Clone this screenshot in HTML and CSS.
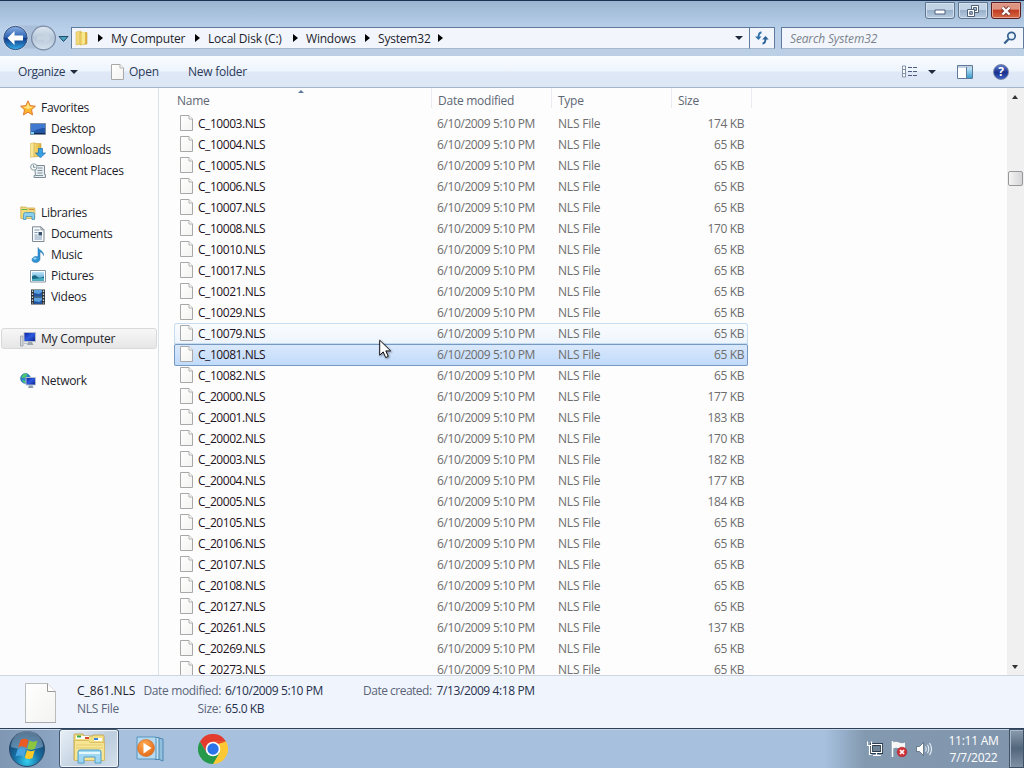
FILE: index.html
```html
<!DOCTYPE html>
<html lang="en">
<head>
    <meta charset="UTF-8">
    <title>System32</title>
    <link rel="stylesheet" href="styles.css">
</head>
<body>
    <svg class="sprite" width="0" height="0">
        <defs>
            <linearGradient id="g-paper" x1="0" y1="0" x2="1" y2="1"><stop offset="0" stop-color="#fff"/><stop offset="1" stop-color="#f3f3f1"/></linearGradient>
            <linearGradient id="g-folder" x1="0" y1="0" x2="1" y2="0"><stop offset="0" stop-color="#f6dc74"/><stop offset="1" stop-color="#d9ae3c"/></linearGradient>
            <linearGradient id="g-sky" x1="0" y1="0" x2="0" y2="1"><stop offset="0" stop-color="#bfe4f8"/><stop offset="1" stop-color="#3b9ccb"/></linearGradient>
            <linearGradient id="g-back" x1="0" y1="0" x2="0" y2="1"><stop offset="0" stop-color="#8fb4e4"/><stop offset=".48" stop-color="#2b62b4"/><stop offset=".5" stop-color="#0e3585"/><stop offset="1" stop-color="#35b4ee"/></linearGradient>
            <linearGradient id="g-forward" x1="0" y1="0" x2="0" y2="1"><stop offset="0" stop-color="#dfe8f2"/><stop offset=".5" stop-color="#b7c7d9"/><stop offset="1" stop-color="#d5e2ef"/></linearGradient>
            <linearGradient id="g-screen" x1="0" y1="0" x2="1" y2="1"><stop offset="0" stop-color="#0a1fa0"/><stop offset=".5" stop-color="#2d59de"/><stop offset="1" stop-color="#0a1c8c"/></linearGradient>
            <radialGradient id="g-orb" cx=".5" cy=".85" r=".8"><stop offset="0" stop-color="#35d0f0"/><stop offset=".45" stop-color="#176fa4"/><stop offset="1" stop-color="#17395f"/></radialGradient>
            <radialGradient id="g-play" cx=".4" cy=".3" r=".8"><stop offset="0" stop-color="#ffac54"/><stop offset="1" stop-color="#e0620f"/></radialGradient>
        </defs>
        <symbol id="i-file" viewBox="0 0 13 16">
            <path d="M.5.5h8.500l3.500 3.500v11.500h-12z" fill="url(#g-paper)" stroke="#a8a8a8"/>
            <path d="M9 .5v3.500h3.500" fill="#fff" stroke="#b0b0b0"/>
        </symbol>
        <symbol id="i-folder" viewBox="0 0 16 16">
            <path d="M2 2l5-1v13l-5 1z" fill="#f3d979" stroke="#d8bb55" stroke-width=".6"/>
            <path d="M6 2.500h7v11.500l-7 1z" fill="url(#g-folder)" stroke="#c9a640" stroke-width=".6"/>
            <path d="M8 1.500l3 .7v11l-3 2z" fill="#f7e88e"/>
        </symbol>
        <symbol id="i-star" viewBox="0 0 16 16">
            <path d="M8 .8l2.200 4.800 5.200.6-3.900 3.500 1.100 5.200L8 12.300l-4.600 2.600 1.100-5.200L.6 6.200l5.200-.6z" fill="#fdb52d" stroke="#d8702c" stroke-width=".9"/>
            <path d="M8 2.500l1.500 4 4 .4-5.500 2.100-5-2.100 3.600-.4z" fill="#ffe685"/>
        </symbol>
        <symbol id="i-desktop" viewBox="0 0 16 16">
            <path d="M.5 2.500h15v11h-15z" fill="#2456a8" stroke="#7c8fa5"/>
            <path d="M1 3h14v4c-5 0-8 2-14 4z" fill="#4178d0"/>
            <path d="M1 12.500h14" stroke="#14284a"/><path d="M1 11h3v2h-3z" fill="#7bd0f1"/>
        </symbol>
        <symbol id="i-downloads" viewBox="0 0 16 16">
            <path d="M.5 1.500l4-1v14l-4 1z" fill="#f8e796" stroke="#d8bb55" stroke-width=".6"/>
            <path d="M4 1.500h7v12.500l-7 1z" fill="url(#g-folder)" stroke="#c9a640" stroke-width=".6"/>
            <path d="M8.500 6.500h4v4.500h3l-5 4.800-5-4.800h3z" fill="#37a1e4" stroke="#1b6cae" stroke-width=".7"/>
        </symbol>
        <symbol id="i-recent" viewBox="0 0 16 16">
            <path d="M4.500 2.500h10v9h1v3h-11.500v-2h1.500z" fill="#e7edf0" stroke="#7c8d96"/>
            <path d="M7.500 5h5M7.500 7.500h5M7.500 10h5M6 12.500h7" stroke="#7e949d"/>
            <circle cx="3.800" cy="4" r="3.200" fill="#f5f9fa" stroke="#8b9da5"/><path d="M3.500 2v2.300h2" fill="none" stroke="#60737c" stroke-width=".8"/>
        </symbol>
        <symbol id="i-libraries" viewBox="0 0 16 16">
            <path d="M.8 3.200V2h5l1 1h8v10.500H.8z" fill="#f4dc7c" stroke="#c8a94a" stroke-width=".8"/>
            <path d="M1.500 4.500h6" stroke="#61b35a"/><path d="M9 4.500h5" stroke="#d68b4a"/>
            <path d="M3.500 14.500v-5q0-2 2-2h7q2 0 2 2v5h-2.500v-3h-6v3z" fill="#8dd0ee" stroke="#4595bd" stroke-width=".8"/>
        </symbol>
        <symbol id="i-documents" viewBox="0 0 16 16">
            <path d="M2.500.8h8.500l3 3v11.700h-11.500z" fill="#f8fafb" stroke="#7f8a92"/>
            <path d="M11 .8v3h3" fill="none" stroke="#7f8a92"/>
            <path d="M4.500 4h5M4.500 6.500h3M4.500 9h3M4.500 11h7.500M4.500 13h7.500" stroke="#6e8fae" stroke-width=".9"/>
            <path d="M8.500 6h3.500v3.500h-3.500z" fill="#3c536e"/>
        </symbol>
        <symbol id="i-music" viewBox="0 0 16 16">
            <path d="M8 .5c.5 2.500 6 3 5.500 8-.5-2.300-2-3.200-3.500-3.500v7c0 2-2 3.500-4.200 3.500s-3.800-1-3.800-2.800 2-3.300 4.200-3.300c.8 0 1.400.1 1.800.4z" fill="#2f93d4" stroke="#1f6fac" stroke-width=".5"/>
            <ellipse cx="5" cy="11.600" rx="1.700" ry="1" fill="#9dd8f7"/>
        </symbol>
        <symbol id="i-pictures" viewBox="0 0 16 16">
            <path d="M.5 2.500h15v11.500h-15z" fill="#fff" stroke="#8897a5"/>
            <path d="M2 4h12v8.500h-12z" fill="url(#g-sky)"/>
            <path d="M2 8.500q3-2.500 5 0t7 0v4h-12z" fill="#1a6680"/><path d="M2 11l12-1v2.500h-12z" fill="#49b1c5"/>
        </symbol>
        <symbol id="i-videos" viewBox="0 0 16 16">
            <path d="M1 .5h14v15h-14z" fill="#2d3238"/>
            <path d="M4 1h8v6.500h-8zM4 8.500h8v6.500h-8z" fill="#5ba0de"/>
            <path d="M4 4l5 1 3-2v4.500h-8zM4 12l5 1 3-2v4h-8z" fill="#23569e"/>
            <path d="M2.500 1.500v13M13.500 1.500v13" stroke="#d4dade" stroke-width="1.300" stroke-dasharray="1.500 1.500"/>
        </symbol>
        <symbol id="i-computer" viewBox="0 0 16 16">
            <path d="M.5 5h2.500v10h-2.500z" fill="#d6dadd" stroke="#8c949b" stroke-width=".7"/>
            <path d="M4 1.500h11.500v9h-11.500z" fill="url(#g-screen)" stroke="#b2bcc9"/>
            <path d="M8 11h4l1.500 3h-6.500z" fill="#9ba6b1"/><path d="M4 12.500h4" stroke="#b8c0c8"/>
        </symbol>
        <symbol id="i-network" viewBox="0 0 16 16">
            <circle cx="5.500" cy="5.500" r="5" fill="#2c83c7" stroke="#1a66a2" stroke-width=".5"/>
            <path d="M1.500 3.500q3-4 6-2.500l-2 3.500-3 .5zM2 7l4 1-1 2q-2-.5-3-3z" fill="#4fc86c"/>
            <path d="M6 4.500h9.500v7.500h-9.500z" fill="url(#g-screen)" stroke="#b5bfca"/>
            <path d="M9 12.500h3.500l1 2.500h-5.500z" fill="#8e9cab"/>
        </symbol>
    </svg>

    <div class="window">
        <header class="titlebar">
            <div class="caption-buttons">
                <span class="caption"><svg width="12" height="8"><path d="M1 3h10v4H1z" fill="#fff" stroke="#50617a"/></svg></span>
                <span class="caption"><svg width="12" height="12"><path d="M4.500.5h7v7h-7z" fill="#fff" stroke="#50617a"/><path d="M6.500 2.500h3v3h-3z" fill="#a6bcd5" stroke="#50617a"/><path d="M.5 4.500h7v7h-7z" fill="#fff" stroke="#50617a"/><path d="M2.700 6.700h2.600v2.600H2.700z" fill="#a6bcd5" stroke="#50617a"/></svg></span>
                <span class="caption close"><svg width="12" height="10"><path d="M2.500 1.500l7 7M9.500 1.500l-7 7" stroke="#7a3b3b" stroke-width="4.200"/><path d="M2.500 1.500l7 7M9.500 1.500l-7 7" stroke="#fff" stroke-width="2.400"/></svg></span>
            </div>
        </header>

        <div class="navbar">
            <svg class="nav-buttons" width="71" height="28" viewBox="0 0 71 28">
                <path d="M16 1.500h26q8 0 12 8l-4 15H14z" fill="#9fb2cc" opacity=".55"/>
                <circle cx="15.500" cy="14" r="12.300" fill="url(#g-back)" stroke="#e2ecf7"/>
                <circle cx="15.500" cy="14" r="11.700" fill="none" stroke="#39527f"/>
                <path d="M7.500 14l7-7v4.500h8.500v5h-8.500V21z" fill="#fff"/>
                <circle cx="43.500" cy="14" r="11.900" fill="url(#g-forward)" stroke="#7a8ca5" stroke-width="1.300"/>
                <path d="M51 14l-7-6.500v4.500h-7v4h7v4.500z" fill="#c6d3e0"/>
                <path d="M59 12.500h9l-4.500 5z" fill="#47a6bd" stroke="#23486e"/>
            </svg>
            <div class="address">
                <svg class="icon" width="16" height="16"><use href="#i-folder"/></svg>
                <i class="arrow"></i><span class="crumb crumb-computer">My Computer</span>
                <i class="arrow"></i><span class="crumb crumb-disk">Local Disk (C:)</span>
                <i class="arrow"></i><span class="crumb crumb-windows">Windows</span>
                <i class="arrow"></i><span class="crumb crumb-system">System32</span>
                <i class="arrow"></i>
                <i class="arrow-down"></i>
            </div>
            <div class="refresh">
                <svg width="14" height="14" viewBox="0 0 14 14"><path d="M6.500 1.500q-3 0-3 5" fill="none" stroke="#2c70a8" stroke-width="1.800"/><path d="M0 5.500h6.500L3.500 9z" fill="#2c70a8"/><path d="M7.500 12.500q3 0 3-5" fill="none" stroke="#285f96" stroke-width="1.800"/><path d="M7.200 8.500h6.500l-3.200-3.500z" fill="#285f96"/></svg>
            </div>
            <div class="search">
                <span>Search System32</span>
                <svg width="14" height="14" viewBox="0 0 14 14"><circle cx="8.500" cy="5" r="3.700" fill="#eaf4fc" stroke="#36608f" stroke-width="1.700"/><path d="M5.700 8l-4.400 4.500" stroke="#36608f" stroke-width="2.200"/></svg>
            </div>
        </div>

        <div class="toolbar">
            <span class="tool organize">Organize<i class="arrow-down"></i></span>
            <span class="tool open"><svg width="13" height="16"><use href="#i-file"/></svg>Open</span>
            <span class="tool new-folder">New folder</span>
            <div class="tool-icons">
                <svg width="16" height="14"><path d="M.5 1h3v11h-3z" fill="#fff" stroke="#8291aa"/><path d="M0 4.500h4M0 8.500h4" stroke="#8291aa"/><path d="M6 2.500h10M6 6.500h10M6 10.500h10" stroke="#4c5d7d" stroke-dasharray="4 1"/></svg>
                <i class="arrow-down"></i>
                <svg class="pane" width="16" height="14"><path d="M.5.500h15v13H.5z" fill="#fff" stroke="#5c7a9c"/><path d="M1 2h14" stroke="#84a3c4"/><path d="M10 3h5v10h-5z" fill="url(#g-sky)"/><path d="M9.500 2v11" stroke="#5c7a9c"/></svg>
                <span class="help">?</span>
            </div>
        </div>

        <div class="content">
            <nav class="sidebar">
                <div class="group">
                    <div class="item"><svg class="icon"><use href="#i-star"/></svg>Favorites</div>
                    <div class="item sub"><svg class="icon"><use href="#i-desktop"/></svg>Desktop</div>
                    <div class="item sub"><svg class="icon"><use href="#i-downloads"/></svg>Downloads</div>
                    <div class="item sub"><svg class="icon"><use href="#i-recent"/></svg>Recent Places</div>
                </div>
                <div class="group">
                    <div class="item"><svg class="icon"><use href="#i-libraries"/></svg>Libraries</div>
                    <div class="item sub"><svg class="icon"><use href="#i-documents"/></svg>Documents</div>
                    <div class="item sub"><svg class="icon"><use href="#i-music"/></svg>Music</div>
                    <div class="item sub"><svg class="icon"><use href="#i-pictures"/></svg>Pictures</div>
                    <div class="item sub"><svg class="icon"><use href="#i-videos"/></svg>Videos</div>
                </div>
                <div class="group">
                    <div class="item current"><svg class="icon"><use href="#i-computer"/></svg>My Computer</div>
                </div>
                <div class="group">
                    <div class="item"><svg class="icon"><use href="#i-network"/></svg>Network</div>
                </div>
            </nav>

            <main class="files">
                <div class="columns">
                    <span class="col-name">Name<i class="sort"></i></span>
                    <span>Date modified</span>
                    <span>Type</span>
                    <span class="col-size">Size</span>
                </div>
                <div class="rows" id="rows"></div>
            </main>

            <div class="scrollbar">
                <i class="scroll-up"></i>
                <div class="thumb"></div>
                <i class="scroll-down"></i>
            </div>
        </div>

        <footer class="details">
            <svg class="big-file" width="31" height="40" viewBox="0 0 31 40"><path d="M.5.500h22l8 8v31H.5z" fill="url(#g-paper)" stroke="#bbb"/><path d="M22.500.500v8h8" fill="#fff" stroke="#999"/><path d="M0 39.500h31" stroke="#aaa"/></svg>
            <div class="props first">
                <div class="detail-name">C_861.NLS</div>
                <div class="label">NLS File</div>
            </div>
            <div class="props second">
                <div><span class="label">Date modified:</span><span class="value">6/10/2009 5:10 PM</span></div>
                <div><span class="label">Size:</span><span class="value">65.0 KB</span></div>
            </div>
            <div class="props third">
                <div><span class="label">Date created:</span><span class="value">7/13/2009 4:18 PM</span></div>
            </div>
        </footer>
    </div>

    <div class="taskbar">
        <div class="start">
            <svg width="38" height="38" viewBox="0 0 38 38">
                <circle cx="19" cy="19" r="17.500" fill="url(#g-orb)" stroke="#2b4869"/>
                <path d="M3 17a16 16 0 0 1 32 0q-16 5-32 0z" fill="#bfd6e8" opacity=".4"/>
                <path d="M12.500 10q4-2.500 8 0l-2 8q-4-3-8.500-.5z" fill="#ea5b24"/>
                <path d="M21.500 10.500q4 2.500 8 0l-2.500 8q-4 2.500-7.500 0z" fill="#8cc63e"/>
                <path d="M9.500 19.500q4-3 8.500 0l-2.200 7.500q-4-2.500-8.300-.5z" fill="#48a5e2"/>
                <path d="M19 20q4 2.500 7.800 0l-2.300 8q-4 2.300-7.700-.2z" fill="#fdc928"/>
            </svg>
        </div>
        <div class="task active">
            <svg width="33" height="31" viewBox="0 0 33 31">
                <path d="M1 27V2q0-1 1-1h8l1 2h9V2h10q1 0 1 1v24z" fill="#f2df86" stroke="#b99d47" stroke-width=".8"/>
                <path d="M3 3h13v3H3z" fill="#fff"/><path d="M4 3.500h4" stroke="#39a84b" stroke-width="2"/><path d="M12 5h4" stroke="#d84934" stroke-width="2"/><path d="M21 6.500h8" stroke="#fff" stroke-width="3"/><path d="M21 6h4" stroke="#3b87d1" stroke-width="2"/>
                <path d="M1.500 7.500h14l2 2h14v18h-30z" fill="#f7e594" stroke="#cfb050" stroke-width=".7"/>
                <path d="M3 12h27M3 15h27" stroke="#e3cd73"/>
                <path d="M5 30V19q0-2 2-2h19q2 0 2 2v11h-6v-6H11v6z" fill="#a0d8f3" stroke="#4c9fc9"/>
                <path d="M6 20h21" stroke="#e4f7ff" stroke-width="2"/>
            </svg>
        </div>
        <div class="task media">
            <svg width="29" height="26" viewBox="0 0 29 26">
                <path d="M22 2l5 1v22l-5-2z" fill="#91bfdd" stroke="#4c87b3"/>
                <path d="M19 1.500h4v22h-4z" fill="#c2e3f2" stroke="#4c87b3"/>
                <path d="M1 1h19v22H1z" fill="#b5daf0" stroke="#5794bf"/>
                <circle cx="10" cy="12" r="8.500" fill="url(#g-play)" stroke="#ce6a28" stroke-width=".6"/>
                <path d="M7.500 7l8 5-8 5.500z" fill="#fff"/>
            </svg>
        </div>
        <div class="task chrome">
            <svg width="30" height="30" viewBox="0 0 30 30">
                <path d="M2 7.500A15 15 0 0 1 28 7.500L15 15z" fill="#e33b2e"/>
                <path d="M28 7.500A15 15 0 0 1 15 30l-3-5 3-17.500z" fill="#fcc934"/>
                <path d="M2 7.500A15 15 0 0 0 15 30l6.500-11.300L9 19z" fill="#269a4a"/>
                <path d="M2 7.500h26l-10 3-9 8.500z" fill="#e33b2e"/>
                <circle cx="15" cy="15" r="7.300" fill="#fff"/><circle cx="15" cy="15" r="5.700" fill="#2a73e8"/>
            </svg>
        </div>
        <div class="tray">
            <svg width="16" height="16"><path d="M4.500 3.500h10v8h-10z" fill="#6f8497" stroke="#2b3b4b" stroke-width="3"/><path d="M4.500 3.500h10v8h-10zM9.500 11.500v3M6 14.500h8" fill="none" stroke="#fff" stroke-width="1.200"/><path d="M.5.500v4h4v-4M2.500 4.500v9h2" fill="none" stroke="#fff" stroke-width="1.200"/></svg>
            <svg width="17" height="16"><path d="M1.500 0v16" stroke="#fff" stroke-width="1.500"/><path d="M2 1.500q3-1.500 6 0t6 0v6q-3 1.500-6 0t-6 0z" fill="#f7f7f7"/><circle cx="11" cy="11" r="4.800" fill="#d23338" stroke="#a31d25" stroke-width=".6"/><path d="M9 9l4 4M13 9l-4 4" stroke="#fff" stroke-width="1.700"/></svg>
            <svg width="16" height="16"><path d="M.5 5.500h3l4-4v13l-4-4h-3z" fill="#fff" stroke="#485a6b" stroke-width=".7"/><path d="M9.500 5.500q1.500 2.500 0 5M11.500 3.800q2.600 4.200 0 8.400M13.500 2q4 6 0 12" fill="none" stroke="#e8eff5" stroke-width="1.100"/></svg>
        </div>
        <div class="clock">
            <div>11:11 AM</div>
            <div>7/7/2022</div>
        </div>
        <div class="show-desktop"></div>
    </div>

    <svg class="cursor" width="14" height="20" viewBox="0 0 14 20"><path d="M.7 1.200v15l3.500-3.300 2.500 5.700 2.600-1.200-2.500-5.500h4.900z" fill="#fff" stroke="#111"/></svg>

    <script>
        const files = [
            ['10003', 174], ['10004', 65], ['10005', 65], ['10006', 65], ['10007', 65],
            ['10008', 170], ['10010', 65], ['10017', 65], ['10021', 65], ['10029', 65],
            ['10079', 65, 'hover'], ['10081', 65, 'selected'], ['10082', 65],
            ['20000', 177], ['20001', 183], ['20002', 170], ['20003', 182], ['20004', 177],
            ['20005', 184], ['20105', 65], ['20106', 65], ['20107', 65], ['20108', 65],
            ['20127', 65], ['20261', 137], ['20269', 65], ['20273', 65]
        ];
        document.getElementById('rows').innerHTML = files.map(([code, size, state]) => `
            <div class="row ${state || ''}">
                <svg width="13" height="16"><use href="#i-file"/></svg>
                <span class="name">C_${code}.NLS</span>
                <span class="date">6/10/2009 5:10 PM</span>
                <span class="type">NLS File</span>
                <span class="size">${size} KB</span>
            </div>`).join('');
    </script>
</body>
</html>
```
FILE: styles.css
```css
* {
    box-sizing: border-box;
}
body {
    margin: 0;
    width: 1024px;
    height: 768px;
    overflow: hidden;
    display: flex;
    flex-direction: column;
    font-family: "Open Sans", "Noto Sans", sans-serif;
    font-size: 12px;
    letter-spacing: -0.25px;
    color: #1e1e2c;
    white-space: nowrap;
}
svg {
    flex: none;
    display: block;
}
.sprite {
    position: absolute;
}
.icon {
    width: 16px;
    height: 16px;
}
.window {
    height: 728px;
    display: flex;
    flex-direction: column;
    background: linear-gradient(#9bb5d0, #b9d0ea 28px, #bccfe5 56px);
    border-top: 1px solid #1d3353;
}

/* title bar and navigation */
.titlebar {
    height: 25px;
    display: flex;
    justify-content: flex-end;
    padding: 1px 3px 0 0;
}
.caption-buttons {
    display: flex;
    gap: 3px;
}
.caption {
    width: 30px;
    height: 17px;
    display: flex;
    align-items: center;
    justify-content: center;
    border: 1px solid #60758f;
    border-radius: 0 0 3px 3px;
    box-shadow: inset 0 0 0 1px #d3e0ee;
    background: linear-gradient(#c3d3e6 45%, #99b0ca 50%, #b8cce2);
}
.caption.close {
    border-color: #5b1d20;
    box-shadow: inset 0 0 0 1px #e5a394;
    background: linear-gradient(#dd9481 40%, #c33b22 50%, #d56b45);
}
.navbar {
    height: 30px;
    display: flex;
    align-items: flex-start;
}
.nav-buttons {
    margin-top: -2px;
}
.address,
.refresh,
.search {
    height: 22px;
    margin-top: 1px;
    border: 1px solid #5e7a9c;
    border-bottom-color: #a5b7cc;
    background: #f2f6fc;
    display: flex;
    align-items: center;
}
.address {
    width: 679px;
    padding: 0 6px 0 2px;
    letter-spacing: -0.2px;
}
.address .arrow {
    margin: 0 8px;
}
.address .icon + .arrow {
    margin-left: 8px;
}
.address .arrow-down {
    margin-left: auto;
}
.arrow {
    border: solid transparent;
    border-width: 4px 0 4px 5px;
    border-left-color: #000;
}
.arrow-down {
    border: solid transparent;
    border-width: 4px 4px 0;
    border-top-color: #1f2a3c;
}
.crumb-computer {
    width: 76px;
}
.crumb-disk {
    width: 77px;
}
.crumb-windows {
    width: 51px;
}
.crumb-system {
    width: 52px;
}
.refresh {
    width: 25px;
    border-left: 0;
    justify-content: center;
}
.search {
    width: 243px;
    margin-left: 6px;
    padding: 0 6px 0 8px;
    justify-content: space-between;
    font-style: italic;
    letter-spacing: -0.15px;
    color: #7b828d;
}

/* toolbar */
.toolbar {
    height: 32px;
    display: flex;
    align-items: center;
    border-bottom: 1px solid #a3b5cb;
    background: linear-gradient(#fafdff, #eef4fc 48%, #dfe8f6 52%, #dce6f5);
    color: #2b3b5b;
}
.tool {
    display: flex;
    align-items: center;
}
.organize {
    margin-left: 18px;
    width: 93px;
    gap: 5px;
    letter-spacing: -0.4px;
}
.open {
    width: 77px;
    gap: 5px;
}
.tool-icons {
    margin-left: auto;
    padding-right: 15px;
    display: flex;
    align-items: center;
}
.tool-icons .arrow-down {
    margin: 0 21px 0 10px;
}
.help {
    width: 16px;
    height: 16px;
    margin-left: 20px;
    border-radius: 50%;
    border: 1px solid #7886a5;
    background: linear-gradient(#5a78cd, #182f8c 55%, #3d5fc6);
    color: #fff;
    font-weight: bold;
    line-height: 14px;
    text-align: center;
}

/* main area */
.content {
    height: 587px;
    display: flex;
    background: #fdfdfe;
}
.sidebar {
    width: 159px;
    padding: 9px 1px 0;
    border-right: 1px solid #dde1e8;
    letter-spacing: -0.3px;
}
.group {
    margin-bottom: 21px;
}
.item {
    height: 21px;
    display: flex;
    align-items: center;
    padding-left: 19px;
    gap: 5px;
}
.item.sub {
    padding-left: 29px;
}
.item.current {
    padding-left: 18px;
    border: 1px solid #d9d9d9;
    border-radius: 3px;
    background: linear-gradient(#f7f7f7, #e6e6e6);
    letter-spacing: -0.2px;
}
.files {
    width: 848px;
    overflow: hidden;
}
.columns {
    height: 25px;
    display: flex;
    line-height: 26px;
    color: #5d6673;
}
.columns span {
    width: 120px;
    height: 20px;
    padding-left: 6px;
    border-right: 1px solid #e9edf2;
}
.columns .col-name {
    position: relative;
    width: 273px;
    padding-left: 18px;
}
.columns .col-size {
    width: 80px;
}
.sort {
    position: absolute;
    left: 139px;
    top: 2px;
    border: solid transparent;
    border-width: 0 3px 3px;
    border-bottom-color: #5c7a97;
}
.rows {
    height: 562px;
    overflow: hidden;
}
.row {
    width: 574px;
    height: 21px;
    margin-left: 15px;
    padding-left: 6px;
    display: flex;
    align-items: center;
    color: #6d6d6d;
    letter-spacing: -0.4px;
}
.row svg {
    margin-top: -1px;
}
.row .name {
    width: 239px;
    padding-left: 5px;
    color: #1e1220;
    letter-spacing: -0.45px;
}
.row .date {
    width: 121px;
    padding-left: 5px;
}
.row .type {
    width: 110px;
    padding-left: 5px;
    letter-spacing: -0.2px;
}
.row .size {
    width: 81px;
    text-align: right;
}
.row.hover {
    border-radius: 3px 3px 0 0;
    box-shadow: inset 0 0 0 1px #c5dcf1;
    background: linear-gradient(#fbfdff, #edf4fc);
}
.row.selected {
    height: 22px;
    margin-bottom: -1px;
    padding-bottom: 1px;
    border-radius: 2px;
    box-shadow: inset 0 0 0 1px #7699c2;
    background: linear-gradient(#dbe9fc, #bfdafb);
}
.scrollbar {
    width: 17px;
    padding-right: 1px;
    display: flex;
    flex-direction: column;
    align-items: center;
    background: #f0f0f1;
}
.scroll-up {
    margin-top: 7px;
    border: solid transparent;
    border-width: 0 3px 4px;
    border-bottom-color: #333;
}
.thumb {
    width: 15px;
    height: 15px;
    margin-top: 72px;
    border: 1px solid #989898;
    border-radius: 2px;
    background: linear-gradient(90deg, #f4f4f4, #d5d5d8);
}
.scroll-down {
    margin: auto 0 6px;
    border: solid transparent;
    border-width: 4px 3px 0;
    border-top-color: #333;
}

/* details pane */
.details {
    height: 53px;
    display: flex;
    padding: 6px 0 0 25px;
    border-top: 1px solid #cdd5e0;
    background: #f0f4fd;
    line-height: 18px;
}
.big-file {
    margin-top: 1px;
}
.first {
    width: 66px;
    margin-left: 21px;
}
.detail-name {
    letter-spacing: 0;
}
.second {
    width: 220px;
}
.second .label {
    display: inline-block;
    width: 78px;
    margin-right: 4px;
    text-align: right;
}
.third .label {
    margin-right: 5px;
    letter-spacing: -0.5px;
}
.label {
    color: #5a6579;
}
.second .label {
    letter-spacing: -0.35px;
}
.value {
    color: #25304c;
    letter-spacing: -0.4px;
}

/* taskbar */
.taskbar {
    height: 40px;
    display: flex;
    border-top: 1px solid #2d4059;
    background: linear-gradient(90deg, #7f97b3, #8aa3c0 50px, #a6c0de 120px, #a6c0de 825px, #8399b0 865px, #8196ad);
    box-shadow: inset 0 1px #c5d5e6;
}
.start {
    width: 59px;
    padding: 1px 0 0 8px;
}
.task {
    display: flex;
    align-items: center;
    justify-content: center;
}
.task.active {
    width: 60px;
    border: 1px solid #42566f;
    border-radius: 3px;
    box-shadow: inset 0 0 0 1px #eef4fa;
    background: linear-gradient(135deg, #e8eff6, #bdcede 60%, #d5e0eb);
}
.media {
    width: 63px;
}
.chrome {
    width: 62px;
}
.tray {
    margin-left: auto;
    display: flex;
    align-items: center;
    gap: 8px;
}
.clock {
    width: 77px;
    padding: 3px 0 0 6px;
    line-height: 17px;
    text-align: center;
    color: #fff;
}
.show-desktop {
    width: 15px;
    border: 1px solid #3f5165;
    box-shadow: inset 1px 1px #a9b8c8;
    background: linear-gradient(#8b9cae, #52667c 50%, #7e90a3);
}
.cursor {
    position: absolute;
    left: 379px;
    top: 339px;
    filter: drop-shadow(1px 1px 1px rgba(0, 0, 0, 0.4));
}
```
